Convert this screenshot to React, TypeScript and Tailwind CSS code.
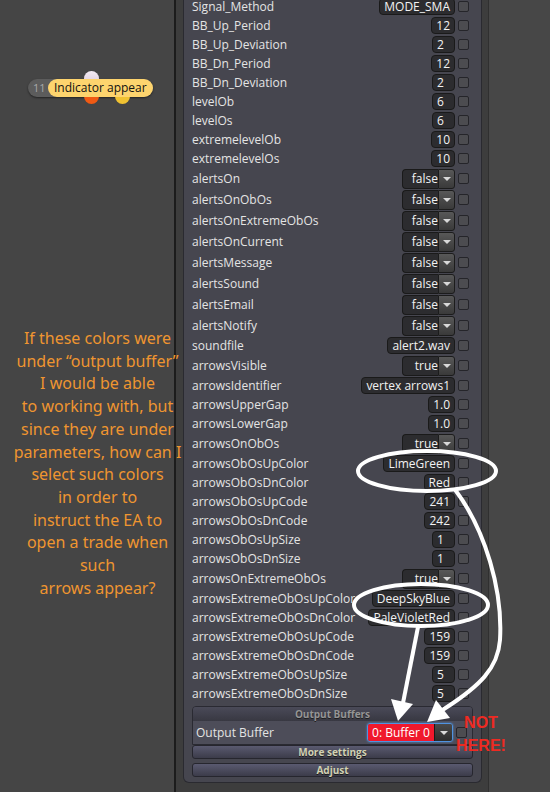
import React from 'react'

type Kind = 't' | 'd'

const rows: [string, string, Kind][] = [
	['Signal_Method', 'MODE_SMA', 't'],
	['BB_Up_Period', '12', 't'],
	['BB_Up_Deviation', '2', 't'],
	['BB_Dn_Period', '12', 't'],
	['BB_Dn_Deviation', '2', 't'],
	['levelOb', '6', 't'],
	['levelOs', '6', 't'],
	['extremelevelOb', '10', 't'],
	['extremelevelOs', '10', 't'],
	['alertsOn', 'false', 'd'],
	['alertsOnObOs', 'false', 'd'],
	['alertsOnExtremeObOs', 'false', 'd'],
	['alertsOnCurrent', 'false', 'd'],
	['alertsMessage', 'false', 'd'],
	['alertsSound', 'false', 'd'],
	['alertsEmail', 'false', 'd'],
	['alertsNotify', 'false', 'd'],
	['soundfile', 'alert2.wav', 't'],
	['arrowsVisible', 'true', 'd'],
	['arrowsIdentifier', 'vertex arrows1', 't'],
	['arrowsUpperGap', '1.0', 't'],
	['arrowsLowerGap', '1.0', 't'],
	['arrowsOnObOs', 'true', 'd'],
	['arrowsObOsUpColor', 'LimeGreen', 't'],
	['arrowsObOsDnColor', 'Red', 't'],
	['arrowsObOsUpCode', '241', 't'],
	['arrowsObOsDnCode', '242', 't'],
	['arrowsObOsUpSize', '1', 't'],
	['arrowsObOsDnSize', '1', 't'],
	['arrowsOnExtremeObOs', 'true', 'd'],
	['arrowsExtremeObOsUpColor', 'DeepSkyBlue', 't'],
	['arrowsExtremeObOsDnColor', 'PaleVioletRed', 't'],
	['arrowsExtremeObOsUpCode', '159', 't'],
	['arrowsExtremeObOsDnCode', '159', 't'],
	['arrowsExtremeObOsUpSize', '5', 't'],
	['arrowsExtremeObOsDnSize', '5', 't'],
]

const note = [
	'If these colors were',
	'under \u201Coutput buffer\u201D',
	'I would be able',
	'to working with, but',
	'since they are under',
	'parameters, how can I',
	'select such colors',
	'in order to',
	'instruct the EA to',
	'open a trade when',
	'such',
	'arrows appear?',
]

const Check = () => (
	<span className="ml-[3px] h-[11px] w-[11px] shrink-0 rounded-[2px] border border-[#25252a] bg-[#4c4c50]" />
)

const Arrow = ({ dark }: { dark?: boolean }) => (
	<span
		className={
			dark
				? 'flex w-[18px] items-center justify-center border-l border-[#1a1a1a] bg-gradient-to-b from-[#4a4a4a] to-[#2c2c2c]'
				: 'flex w-[17px] items-center justify-center rounded-r-[3px] border border-[#1c1c1c] bg-gradient-to-b from-[#585858] to-[#3a3a3a]'
		}
	>
		<span className="h-0 w-0 border-x-[4px] border-t-[4px] border-x-transparent border-t-[#d8d8d8]" />
	</span>
)

const Row = ({ label, value, kind }: { label: string; value: string; kind: Kind }) => (
	<div className={kind === 'd' ? 'flex h-[21px] items-center' : 'flex h-[19px] items-center'}>
		<span className="flex-1 truncate text-[12px] text-[#e4e4e4]">{label}</span>
		{kind === 't' ? (
			<span className="flex h-[17px] min-w-[23px] items-center rounded-[4px] border border-[#1a1a1a] bg-[#2c2c2f] px-[4px] text-[12px] font-medium text-[#f2f2f2]">
				{value}
			</span>
		) : (
			<span className="flex h-[20px]">
				<span className="flex w-[36px] items-center justify-end overflow-hidden rounded-l-[4px] border border-r-0 border-[#1a1a1a] bg-[#2c2c2f] text-[12px] font-medium text-[#f2f2f2]">
					{value}
				</span>
				<Arrow />
			</span>
		)}
		<Check />
	</div>
)

const Bar = ({ children, className }: { children: React.ReactNode; className?: string }) => (
	<div
		className={
			'flex h-[14px] items-center justify-center rounded-[3px] border border-[#26262e] bg-gradient-to-b from-[#5a5a70] to-[#3c3c4a] text-[10px] font-bold text-[#d2d2b4] [text-shadow:0_1px_0_#1a1a1a] ' +
			(className ?? '')
		}
	>
		{children}
	</div>
)

export default function App() {
	return (
		<div className="relative flex h-[792px] w-[550px] overflow-hidden bg-[#454545] font-['Open_Sans',sans-serif]">
			{/* node canvas */}
			<div className="w-[174px] shrink-0">
				<div className="pl-[28px] pt-[79px]">
					<div className="relative flex h-[18px] w-fit items-center rounded-full bg-[#5c5c5c] shadow-[0_1px_2px_rgba(0,0,0,0.5)]">
						<span className="absolute left-[56px] top-[-8px] h-[15px] w-[15px] rounded-full bg-gradient-to-b from-[#f4ecf4] to-[#d9c8d9]" />
						<span className="absolute left-[56px] top-[10px] h-[15px] w-[15px] rounded-full bg-[#f05a14]" />
						<span className="absolute left-[87px] top-[10px] h-[15px] w-[15px] rounded-full bg-[#f0c232]" />
						<span className="relative z-10 w-[20px] pl-[5px] text-[11px] text-[#a9a9a9]">11</span>
						<span className="relative z-10 flex h-[18px] items-center rounded-full bg-[#fdd46e] px-[6px] text-[12px] text-[#111]">
							Indicator appear
						</span>
					</div>
				</div>
				<p className="relative z-10 ml-[10px] mt-[230px] w-[175px] whitespace-nowrap text-center font-['Noto_Sans',sans-serif] text-[16px] leading-[22.7px] text-[#ef9530]">
					{note.map((l) => (
						<span key={l} className="block">
							{l}
						</span>
					))}
				</p>
			</div>

			<div className="w-[2px] shrink-0 bg-[#1c1c1c]" />

			{/* inputs window */}
			<div className="w-[313px] shrink-0 border-r border-[#303030] bg-[#3d3d3d] px-[7px]">
				<div className="-mt-[3px] flex w-[299px] flex-col rounded-b-[6px] border border-t-0 border-[#2a2a30] bg-[#46464f] px-[8px] pb-[5px]">
					<div className="flex flex-col pr-[4px]">
						{rows.map(([l, v, k]) => (
							<Row key={l} label={l} value={v} kind={k} />
						))}
					</div>

					<div className="mt-[3px] overflow-hidden rounded-t-[4px] border border-[#2a2a32]">
						<div className="flex h-[14px] items-center justify-center bg-gradient-to-b from-[#4a4a58] to-[#383842] text-[10px] font-bold text-[#959595] [text-shadow:0_1px_0_#1e1e1e]">
							Output Buffers
						</div>
						<div className="flex h-[23px] items-center bg-[#4d4d59] pl-[3px] pr-[5px]">
							<span className="flex-1 text-[12px] text-[#e4e4e4]">Output Buffer</span>
							<span className="flex h-[19px] overflow-hidden rounded-[3px] border border-[#4f93e0] shadow-[0_0_2px_#4f93e0]">
								<span className="flex w-[66px] items-center justify-center bg-[#f0182c] text-[12px] font-medium text-white">
									0: Buffer 0
								</span>
								<Arrow dark />
							</span>
							<Check />
						</div>
					</div>
					<Bar>More settings</Bar>
					<Bar className="mt-[4px]">Adjust</Bar>
				</div>
			</div>

			<div className="flex-1 bg-[#474747]" />

			{/* annotations */}
			<svg className="pointer-events-none absolute inset-0 z-20" width="550" height="792" viewBox="0 0 550 792">
				<g fill="none" stroke="#fff" strokeWidth="4" strokeLinecap="round">
					<ellipse cx="427" cy="471" rx="69" ry="20" />
					<ellipse cx="421" cy="605" rx="67" ry="21" />
					<path d="M418 627 L403 703" />
					<path d="M456 491 C485 530 503 590 500 640 C498 668 480 686 444 709" />
				</g>
				<g fill="#fff">
					<polygon points="398,721 391,699 413,704" />
					<polygon points="427,722 436,700 450,718" />
				</g>
			</svg>
			<div className="absolute left-[451px] top-[711px] z-30 w-[60px] text-center font-['Liberation_Sans',sans-serif] text-[16px] font-bold leading-[23px] text-[#ee2a22]">
				NOT
				<br />
				HERE!
			</div>
		</div>
	)
}
